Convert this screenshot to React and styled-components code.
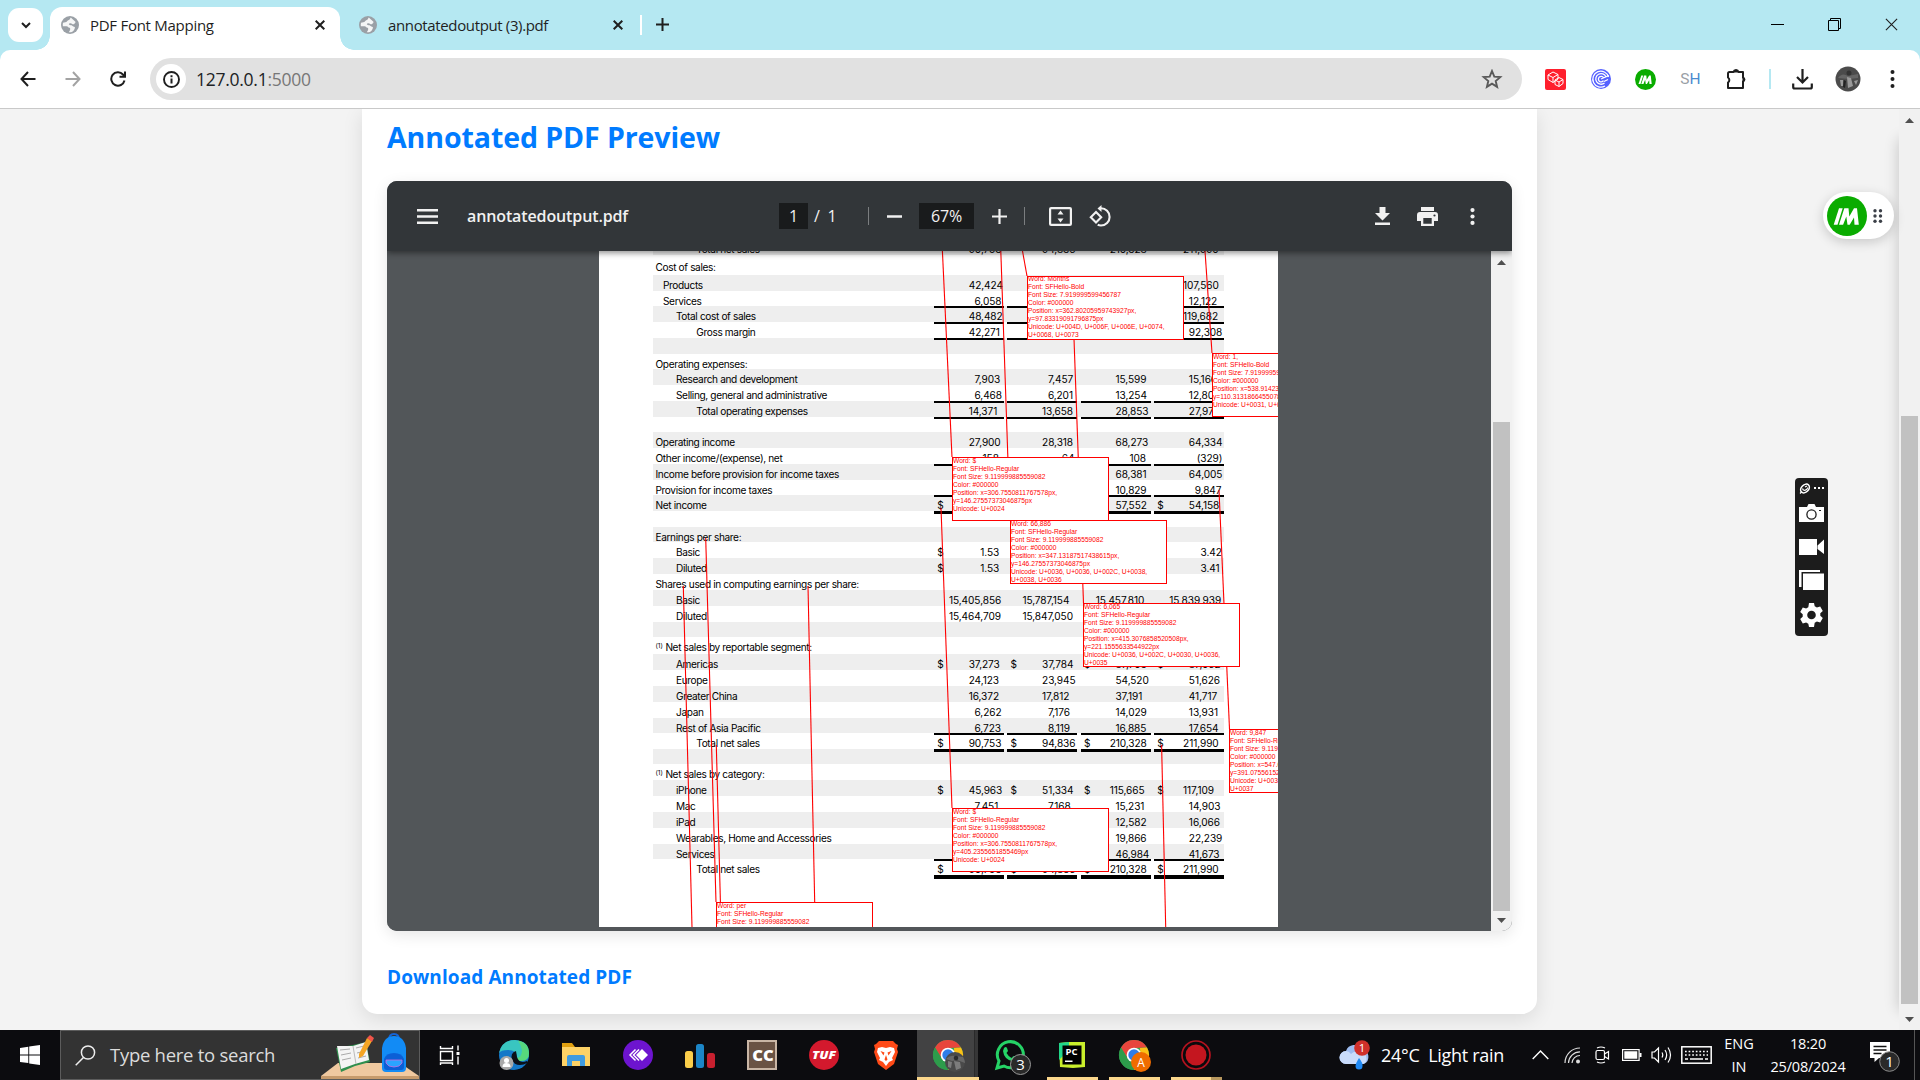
import React from 'react';
import styled, { createGlobalStyle } from 'styled-components';

const Global = createGlobalStyle`
  * { box-sizing: border-box; }
  body { margin: 0; overflow: hidden; background: #f3f3f3; }
  svg { display: block; flex: none; }
`;

const ui = `'Open Sans', 'Noto Sans', sans-serif`;

const Screen = styled.div`
  width: 1920px;
  height: 1080px;
  display: flex;
  flex-direction: column;
  overflow: hidden;
  font-family: ${ui};
  color: #1f1f1f;
`;

/* ---------- browser chrome ---------- */

const TabStrip = styled.div`
  height: 50px;
  flex: none;
  background: #b5e8f2;
  display: flex;
  padding-left: 8px;
`;

const TabSearch = styled.div`
  width: 35px;
  height: 34px;
  margin-top: 8px;
  border-radius: 11px;
  background: #fff;
  display: flex;
  align-items: center;
  justify-content: center;
`;

const Tab = styled.div`
  position: relative;
  width: ${(p) => p.$w}px;
  height: 43px;
  margin: 7px 0 0 ${(p) => p.$ml}px;
  padding: 0 15px 7px 11px;
  display: flex;
  align-items: center;
  gap: 11px;
  border-radius: 12px 12px 0 0;
  background: ${(p) => (p.$active ? '#fff' : 'transparent')};
`;

const TabFlare = styled.i`
  position: absolute;
  bottom: 0;
  ${(p) => p.$side}: -14px;
  width: 14px;
  height: 14px;
  background: radial-gradient(circle at ${(p) => (p.$side === 'left' ? '0 0' : '100% 0')}, transparent 13.5px, #fff 14px);
`;

const TabTitle = styled.span`
  flex: 1;
  font-size: 15px;
  letter-spacing: ${(p) => p.$ls}px;
  white-space: pre;
`;

const StripDivider = styled.i`
  width: 2px;
  height: 20px;
  margin: 15px 14px 0 2px;
  background: #fff;
`;

const StripPlus = styled.div`
  padding-top: 18px;
  flex: 1;
`;

const WindowControls = styled.div`
  display: flex;
  align-items: center;
  height: 49px;
  gap: 44px;
  padding-right: 22px;
`;

const ToolbarBack = styled.div`
  background: #b5e8f2;
  flex: none;
`;

const Toolbar = styled.div`
  height: 59px;
  background: #fff;
  border-bottom: 1px solid #c9c9c9;
  border-radius: 10px 10px 0 0;
  display: flex;
  align-items: center;
  padding-left: 5px;
`;

const Slot = styled.div`
  width: ${(p) => p.$w || 45}px;
  display: flex;
  align-items: center;
  justify-content: center;
`;

const Omnibox = styled.div`
  width: 1372px;
  height: 42px;
  margin: 0 11px 0 10px;
  padding: 0 16px 0 6px;
  border-radius: 21px;
  background: #e1e1e1;
  display: flex;
  align-items: center;
  gap: 11px;
`;

const InfoChip = styled.div`
  width: 30px;
  height: 30px;
  border-radius: 50%;
  background: #fff;
  display: flex;
  align-items: center;
  justify-content: center;
`;

const Url = styled.div`
  flex: 1;
  font-size: 17.5px;
  letter-spacing: -0.27px;
  margin-left: -1px;
  color: #202124;
  span { color: #777; }
`;

const ShLabel = styled.span`
  font: 15.5px Roboto, sans-serif;
  color: #9aa0a6;
  b { font-weight: 400; color: #4a8bd0; }
`;

const ToolDivider = styled.i`
  width: 2px;
  height: 20px;
  margin: 0 9px 0 9px;
  background: #b5e8f2;
`;

/* ---------- web page ---------- */

const PageArea = styled.div`
  position: relative;
  flex: 1;
  display: flex;
  min-height: 0;
`;

const Main = styled.main`
  position: relative;
  width: 1899px;
  background: #f3f3f3;
  overflow: hidden;
`;

const EdgeShade = styled.div`
  position: absolute;
  left: 100%;
  top: 30px;
  bottom: 20px;
  width: 30px;
  box-shadow: 0 0 15px rgba(0, 0, 0, 0.2);
`;

const Card = styled.section`
  width: 1175px;
  height: 905px;
  margin: 0 auto;
  padding: 0 25px;
  background: #fff;
  border-radius: 0 0 15px 15px;
  box-shadow: 0 5px 20px rgba(0, 0, 0, 0.1);
  display: flex;
  flex-direction: column;
`;

const Heading = styled.h2`
  margin: 8px 0 24px;
  font-size: 28.5px;
  line-height: 40px;
  letter-spacing: -0.08px;
  font-weight: 700;
  color: #007bff;
`;

const DownloadLink = styled.a`
  margin-top: 33px;
  font-size: 19px;
  line-height: 26px;
  letter-spacing: 0.09px;
  font-weight: 700;
  color: #007bff;
`;

const ScrollTrack = styled.div`
  width: 21px;
  background: #f1f1f1;
  display: flex;
  flex-direction: column;
  align-items: center;
  justify-content: space-between;
  padding: ${(p) => p.$pad};
`;

const ScrollThumb = styled.div`
  width: 17px;
  height: ${(p) => p.$h}px;
  margin-top: ${(p) => p.$mt}px;
  background: #c1c1c1;
`;

const ScrollGroup = styled.div`
  flex: 1;
`;

/* ---------- pdf viewer ---------- */

const Viewer = styled.div`
  height: 750px;
  flex: none;
  border-radius: 10px;
  overflow: hidden;
  background: #525659;
  display: flex;
  flex-direction: column;
`;

const ViewerShadow = styled.div`
  border-radius: 10px;
  box-shadow: 0 4px 15px rgba(0, 0, 0, 0.1);
`;

const PdfBar = styled.div`
  position: relative;
  z-index: 2;
  height: 70px;
  flex: none;
  background: #323639;
  box-shadow: 0 2px 6px rgba(0, 0, 0, 0.45);
  display: flex;
  align-items: center;
  padding: 0 30px;
  color: #f1f1f1;
`;

const PdfTitle = styled.div`
  width: 312px;
  margin-left: 29px;
  font-size: 16px;
  font-weight: 600;
  letter-spacing: -0.12px;
`;

const PdfField = styled.div`
  width: ${(p) => p.$w}px;
  height: 26px;
  background: #191b1c;
  display: flex;
  align-items: center;
  justify-content: center;
  font-size: 16px;
  letter-spacing: -0.2px;
`;

const PdfTotal = styled.div`
  width: 60px;
  padding-left: 6px;
  font-size: 16px;
  word-spacing: 3.5px;
`;

const PdfSep = styled.i`
  width: 1px;
  height: 18px;
  background: #7b7e80;
`;

const PdfTool = styled.div`
  width: ${(p) => p.$w}px;
  margin-left: ${(p) => p.$ml || 0}px;
  display: flex;
  justify-content: center;
`;

const Spacer = styled.div`
  flex: 1;
`;

const PdfBody = styled.div`
  flex: 1;
  min-height: 0;
  display: flex;
`;

const PdfCanvas = styled.div`
  flex: 1;
  padding: 0 213px 4px 212px;
  background: #525659;
`;

const Sheet = styled.div`
  position: relative;
  width: 679px;
  height: 676px;
  padding: 0 54px;
  background: #fff;
  overflow: hidden;
`;

const Statement = styled.div`
  margin-top: -12px;
  font-family: Inter, sans-serif;
  font-size: 10.1px;
  color: #000;
`;

const Line = styled.div`
  height: ${(p) => p.$h}px;
  margin-top: ${(p) => p.$mt || 0}px;
  display: grid;
  grid-template-columns: 277.6px repeat(4, 70px);
  column-gap: 3.4px;
  background: ${(p) => (p.$shade ? '#eee' : 'transparent')};
`;

const Label = styled.div`
  padding: 0 0 0 ${(p) => p.$pad}px;
  line-height: 20.4px;
  height: 100%;
  white-space: nowrap;
  letter-spacing: -0.36px;
  sup { font-size: 6.5px; line-height: 0; vertical-align: 3px; letter-spacing: 0; }
`;

const Cell = styled.div`
  height: 100%;
  border-top: ${(p) => p.$rule || 0}px solid #000;
  padding: 0 4px 0 3.2px;
  display: flex;
  justify-content: space-between;
  line-height: 20.4px;
  white-space: nowrap;
  letter-spacing: -0.08px;
  > * { margin-top: ${(p) => 0 - (p.$rule || 0)}px; }
`;

const Figure = styled.span`
  width: ${(p) => p.$w}px;
  margin-left: auto;
`;

const Wires = styled.svg`
  position: absolute;
  left: 0;
  top: 0;
`;

const Note = styled.div`
  position: absolute;
  left: ${(p) => p.$x}px;
  top: ${(p) => p.$y}px;
  width: 157px;
  height: 64px;
  border: 1px solid #f00;
  background: #fff;
  color: #f00;
  font: 6.67px/8px 'Liberation Sans', Arial, sans-serif;
  white-space: pre;
  div { margin-top: ${(p) => (p.$raise ? -2.5 : -1.5)}px; }
`;

/* ---------- floating tools ---------- */

const FloatPill = styled.div`
  position: absolute;
  left: 1823px;
  top: 83px;
  width: 71px;
  height: 47px;
  border-radius: 24px;
  background: #fff;
  box-shadow: 0 3px 12px rgba(0, 0, 0, 0.18);
  display: flex;
  align-items: center;
  gap: 6px;
  padding-left: 4px;
`;

const Recorder = styled.div`
  position: absolute;
  left: 1795px;
  top: 369px;
  width: 33px;
  height: 158px;
  border-radius: 4px;
  background: #1c1c1c;
`;

/* ---------- taskbar ---------- */

const Taskbar = styled.div`
  height: 50px;
  flex: none;
  background: #0c0c0f;
  display: flex;
  color: #fff;
`;

const StartButton = styled.div`
  width: 60px;
  display: flex;
  align-items: center;
  justify-content: center;
`;

const SearchBox = styled.div`
  width: 360px;
  margin-right: 1px;
  background: #333;
  border: 1px solid #5c5c5c;
  display: flex;
  align-items: center;
  padding-left: 14px;
`;

const SearchText = styled.span`
  margin-left: 14px;
  margin-top: -2px;
  width: 212px;
  font-size: 18.5px;
  letter-spacing: -0.27px;
  color: #dcdcdc;
`;

const TaskButton = styled.div`
  width: 62px;
  display: flex;
  flex-direction: column;
  align-items: center;
  padding-top: 10px;
  background: ${(p) => (p.$on ? 'linear-gradient(90deg, #424243 57px, #1c1c1d 57px, #363637 58px, #363637 61px, transparent 61px)' : 'none')};
  border-bottom: 3px solid ${(p) => (p.$on ? '#fbd78c' : 'transparent')};
`;

const RunMark = styled.i`
  width: ${(p) => p.$w}px;
  height: 3px;
  margin-top: auto;
  margin-bottom: -3px;
  flex: none;
  background: ${(p) => (p.$stack ? 'linear-gradient(90deg, #fbd78c 40px, #b8985f 40px)' : '#fbd78c')};
`;

const Weather = styled.div`
  width: 184px;
  display: flex;
  align-items: center;
  gap: 11px;
  font-size: 18px;
  white-space: pre;
  letter-spacing: -0.3px;
`;

const TrayIcon = styled.div`
  width: ${(p) => p.$w}px;
  display: flex;
  align-items: center;
  justify-content: center;
`;

const TrayText = styled.div`
  width: ${(p) => p.$w}px;
  padding-top: 2px;
  text-align: center;
  font-size: 14.5px;
  line-height: 23px;
  letter-spacing: ${(p) => p.$ls || 0}px;
`;

const ShowDesktop = styled.i`
  width: 6px;
  border-left: 1px solid #555;
`;

/* ---------- icons ---------- */

const Globe = () => (
  <svg width="18" height="18" viewBox="0 0 18 18">
    <circle cx="9" cy="9" r="9" fill="#9aa0a6" />
    <path d="M9.8 1.6c-1 1-.5 2-2 2.4-1.700.3-1.500 1.600-2.500 2L2 6.800a7.300 7.300 0 0 0-.1 3.400h3.600c1.800 0 1.300 1.500 3 1.600.9.100.7 1.300.6 2.100l-1.300 2.300c4 .5 5.300-2 6.200-4.500-.2-1.200-1.500-.7-2.400-1.700-1.200-1.200-2.800-.4-3.600-1.400-.5-.9.600-1.500 1.500-1.400 1.400.2 1.700 1.300 3.200 1 1.200-.2.800-1.800 2.200-2z" fill="#fff" opacity=".9" />
  </svg>
);

const Cross = ({ s = 10, w = 2 }) => (
  <svg width={s} height={s} viewBox="0 0 10 10" stroke="#1f1f1f" strokeWidth={w}>
    <path d="M.7.7l8.600 8.600M9.300.7L.7 9.300" />
  </svg>
);

const ImMark = ({ size }) => (
  <svg width={size} height={size} viewBox="0 0 40 40">
    <circle cx="20" cy="20" r="20" fill="#0aac00" />
    <path d="M12 12.200h3.700l-5.200 16.500H6.700z" fill="#fff" />
    <path d="M17.300 12.200h4.200l.8 8.300 4.700-8.300h3L31.800 28.700h-4.300l-.5-7.200-4.300 7.200h-2.200l-1.200-8.200-3.200 8.200H12z" fill="#fff" />
  </svg>
);

const Dots = ({ color = '#1f1f1f', r = 2, h = 18 }) => (
  <svg width="5" height={h} viewBox={`0 0 5 ${h}`} fill={color}>
    <circle cx="2.500" cy={r} r={r} />
    <circle cx="2.500" cy={h / 2} r={r} />
    <circle cx="2.500" cy={h - r} r={r} />
  </svg>
);

const UpTri = () => (
  <svg width="9" height="5" viewBox="0 0 9 5"><path d="M0 5l4.500-5L9 5z" fill="#505050" /></svg>
);
const DownTri = () => (
  <svg width="9" height="5" viewBox="0 0 9 5"><path d="M0 0l4.500 5L9 0z" fill="#505050" /></svg>
);

const ChromeIcon = ({ badge, letter }) => (
  <svg width="38" height="34" viewBox="-4 0 38 34">
    <circle cx="15" cy="15" r="15" fill="#34a853" />
    <path d="M2 7.500A15 15 0 0 1 28 7.500L15 8 9 19z" fill="#e8453c" />
    <path d="M28 7.500A15 15 0 0 1 15 30l6.500-11L21 8z" fill="#fbc116" />
    <path d="M2 7.500L9 19l8 3-2 8A15 15 0 0 1 2 7.500z" fill="#2d9c4b" />
    <circle cx="15" cy="15" r="7.300" fill="#fff" />
    <circle cx="15" cy="15" r="5.700" fill="#2f7de9" />
    <circle cx="22" cy="22" r="10" fill={badge} />
    {letter ? (
      <text x="22" y="26.500" textAnchor="middle" fontSize="12" fill="#fff" fontFamily="Open Sans">A</text>
    ) : (
      <g fill="#8d8d8d">
        <path d="M13 19q4-4 9-3l8 1q2 3 2 6l-8-3-5 1z" opacity=".45" />
        <circle cx="23" cy="18" r="2.300" fill="#2c2c2c" />
        <path d="M15 21l4 1-1 6-3-1zM21 21l6 1 1 6-5 2z" opacity=".75" />
      </g>
    )}
  </svg>
);

/* ---------- statement data ---------- */

const rows = [
  { h: 16, t: 'Total net sales', i: 3, v: ['90,753', '94,836', '210,328', '211,990'] },
  { h: 18, mt: 2, t: 'Cost of sales:', i: 0 },
  { h: 16, t: 'Products', i: 1, v: ['42,424', '', '', '107,560'] },
  { h: 15, t: 'Services', i: 1, v: ['6,058', '', '', '12,122'] },
  { h: 16, t: 'Total cost of sales', i: 2, rule: 2, v: ['48,482', '', '', '119,682'] },
  { h: 16, t: 'Gross margin', i: 3, rule: 2, v: ['42,271', '', '', '92,308'] },
  { h: 16, rule: 2 },
  { h: 15, t: 'Operating expenses:', i: 0 },
  { h: 16, t: 'Research and development', i: 2, v: ['7,903', '7,457', '15,599', '15,166'] },
  { h: 16, t: 'Selling, general and administrative', i: 2, v: ['6,468', '6,201', '13,254', '12,808'] },
  { h: 16, t: 'Total operating expenses', i: 3, rule: 2, v: ['14,371', '13,658', '28,853', '27,974'] },
  { h: 15, rule: 2 },
  { h: 16, t: 'Operating income', i: 0, v: ['27,900', '28,318', '68,273', '64,334'] },
  { h: 16, t: 'Other income/(expense), net', i: 0, v: ['158', '64', '108', '(329)'] },
  { h: 16, t: 'Income before provision for income taxes', i: 0, rule: 2, v: ['', '', '68,381', '64,005'] },
  { h: 15, t: 'Provision for income taxes', i: 0, v: ['', '', '10,829', '9,847'] },
  { h: 16, t: 'Net income', i: 0, rule: 2, d: [1, 0, 0, 1], v: ['', '', '57,552', '54,158'] },
  { h: 16, rule: 3 },
  { h: 15, t: 'Earnings per share:', i: 0 },
  { h: 16, t: 'Basic', i: 2, d: [1], v: ['1.53', '', '', '3.42'] },
  { h: 16, t: 'Diluted', i: 2, d: [1], v: ['1.53', '', '', '3.41'] },
  { h: 16, t: 'Shares used in computing earnings per share:', i: 0 },
  { h: 16, t: 'Basic', i: 2, v: ['15,405,856', '15,787,154', '15,457,810', '15,839,939'] },
  { h: 16, t: 'Diluted', i: 2, v: ['15,464,709', '15,847,050', '', ''] },
  { h: 15 },
  { h: 17, t: 'Net sales by reportable segment:', i: 0, sup: 1 },
  { h: 16, t: 'Americas', i: 2, d: [1, 1, 1, 1], v: ['37,273', '37,784', '87,703', '87,062'] },
  { h: 16, t: 'Europe', i: 2, v: ['24,123', '23,945', '54,520', '51,626'] },
  { h: 16, t: 'Greater China', i: 2, v: ['16,372', '17,812', '37,191', '41,717'] },
  { h: 16, t: 'Japan', i: 2, v: ['6,262', '7,176', '14,029', '13,931'] },
  { h: 15, t: 'Rest of Asia Pacific', i: 2, v: ['6,723', '8,119', '16,885', '17,654'] },
  { h: 16, t: 'Total net sales', i: 3, rule: 2, d: [1, 1, 1, 1], v: ['90,753', '94,836', '210,328', '211,990'] },
  { h: 15, rule: 3 },
  { h: 16, t: 'Net sales by category:', i: 0, sup: 1 },
  { h: 16, t: 'iPhone', i: 2, d: [1, 1, 1, 1], v: ['45,963', '51,334', '115,665', '117,109'] },
  { h: 16, t: 'Mac', i: 2, v: ['7,451', '7,168', '15,231', '14,903'] },
  { h: 16, t: 'iPad', i: 2, v: ['', '', '12,582', '16,066'] },
  { h: 16, t: 'Wearables, Home and Accessories', i: 2, v: ['', '', '19,866', '22,239'] },
  { h: 15, t: 'Services', i: 2, v: ['', '', '46,984', '41,673'] },
  { h: 16, t: 'Total net sales', i: 3, rule: 2, d: [1, 1, 1, 1], v: ['90,753', '94,836', '210,328', '211,990'] },
  { h: 16, rule: 4, plain: true },
];

const indents = [2.5, 10, 23, 43.3];
const figureWidth = (s) => {
  const digits = s.replace(/[^0-9]/g, '').length;
  return digits * 5.8 + (s.length - digits) * (s[0] === '(' ? 3 : 2.3);
};

const wires = [
  [343.4, 0, 353, 206],
  [342, 257, 353, 557],
  [401.8, 0, 411, 269],
  [423.5, 0, 428, 25],
  [474, 60, 484.5, 352],
  [606, 0, 613, 102],
  [620, 239, 630.5, 478],
  [106.7, 287, 117, 651],
  [84.3, 335, 93, 676],
  [209, 335, 215.7, 651],
  [117.3, 494, 121.4, 651],
  [562.6, 494, 566.7, 676],
];

const notes = [
  [428, 25, 'Word: Months\nFont: SFHello-Bold\nFont Size: 7.919999599456787\nColor: #000000\nPosition: x=362.80205959743927px,\ny=97.83319091796875px\nUnicode: U+004D, U+006F, U+006E, U+0074,\nU+0068, U+0073', true],
  [613, 102, 'Word: 1,\nFont: SFHello-Bold\nFont Size: 7.919999599456787\nColor: #000000\nPosition: x=538.9142303466797px,\ny=110.31318664550781px\nUnicode: U+0031, U+002C'],
  [411, 269, 'Word: 66,886\nFont: SFHello-Regular\nFont Size: 9.119999885559082\nColor: #000000\nPosition: x=347.13187517438615px,\ny=146.27557373046875px\nUnicode: U+0036, U+0036, U+002C, U+0038,\nU+0038, U+0036'],
  [353, 206, 'Word: $\nFont: SFHello-Regular\nFont Size: 9.119999885559082\nColor: #000000\nPosition: x=306.7550811767578px,\ny=146.27557373046875px\nUnicode: U+0024'],
  [484, 352, 'Word: 6,065\nFont: SFHello-Regular\nFont Size: 9.119999885559082\nColor: #000000\nPosition: x=415.3076858520508px,\ny=221.1555633544922px\nUnicode: U+0036, U+002C, U+0030, U+0036,\nU+0035'],
  [630, 478, 'Word: 9,847\nFont: SFHello-Regular\nFont Size: 9.119999885559082\nColor: #000000\nPosition: x=547.0\ny=391.0755615234375px\nUnicode: U+0039, U+002C\nU+0037'],
  [353, 557, 'Word: $\nFont: SFHello-Regular\nFont Size: 9.119999885559082\nColor: #000000\nPosition: x=306.7550811767578px,\ny=405.2355651855469px\nUnicode: U+0024'],
  [117, 651, 'Word: per\nFont: SFHello-Regular\nFont Size: 9.119999885559082'],
];

function Browser() {
  return (
    <>
      <TabStrip>
        <TabSearch>
          <svg width="10" height="7" viewBox="0 0 10 7" fill="none" stroke="#1f1f1f" strokeWidth="2"><path d="M1 1l4 4 4-4" /></svg>
        </TabSearch>
        <Tab $active $w={290} $ml={7}>
          <TabFlare $side="left" />
          <Globe />
          <TabTitle $ls={-0.27}>PDF Font Mapping</TabTitle>
          <Cross />
          <TabFlare $side="right" />
        </Tab>
        <Tab $w={290} $ml={8}>
          <Globe />
          <TabTitle $ls={-0.36}>annotatedoutput (3).pdf</TabTitle>
          <Cross />
        </Tab>
        <StripDivider />
        <StripPlus>
          <svg width="13" height="13" viewBox="0 0 13 13" stroke="#1f1f1f" strokeWidth="2"><path d="M6.500 0v13M0 6.500h13" /></svg>
        </StripPlus>
        <WindowControls>
          <svg width="13" height="13" viewBox="0 0 13 13"><path d="M0 6h13v1H0z" fill="#000" /></svg>
          <svg width="13" height="13" viewBox="0 0 13 13" fill="none" stroke="#000"><path d="M.5 2.500h10v10H.5zM2.500 2.500v-2h10v10h-2" /></svg>
          <Cross s={13} w={0.85} />
        </WindowControls>
      </TabStrip>
      <ToolbarBack>
        <Toolbar>
          <Slot>
            <svg width="16" height="16" viewBox="0 0 16 16" fill="none" stroke="#1f1f1f" strokeWidth="2"><path d="M15.500 8H1.500M8 1L1.500 8 8 15" /></svg>
          </Slot>
          <Slot>
            <svg width="16" height="16" viewBox="0 0 16 16" fill="none" stroke="#a3a3a3" strokeWidth="2"><path d="M.5 8h14M8 1l6.500 7L8 15" /></svg>
          </Slot>
          <Slot>
            <svg width="16" height="16" viewBox="0 0 16 16" fill="none" stroke="#1f1f1f" strokeWidth="2"><path d="M14.500 9.500A6.700 6.700 0 1 1 13 3.500L15 5.500M15 .5v5.300H9.500" /></svg>
          </Slot>
          <Omnibox>
            <InfoChip>
              <svg width="17" height="17" viewBox="0 0 17 17"><circle cx="8.500" cy="8.500" r="7.500" fill="none" stroke="#1f1f1f" strokeWidth="1.900" /><path d="M7.500 7.500h2v5h-2zM7.500 4.300h2v2h-2z" fill="#1f1f1f" /></svg>
            </InfoChip>
            <Url>127.0.0.1<span>:5000</span></Url>
            <svg width="28" height="20" viewBox="-4 0 28 20" fill="none" stroke="#5a5a5a" strokeWidth="1.900"><path d="M10 2l2.300 5.600 6 .5-4.600 3.900 1.400 5.900L10 14.700l-5.100 3.200 1.400-5.900L1.700 8.100l6-.5z" /></svg>
          </Omnibox>
          <Slot>
            <svg width="21" height="21" viewBox="0 0 21 21"><rect width="21" height="21" rx="2" fill="#ff1f2d" /><g fill="none" stroke="#fff" strokeWidth="1"><path d="M3 6l5-3 5 2.500v4.500l-5 3.500-5-3zM3 6l5 2.500 5-3M8 8.500v5M10 11l4-2.500 4 2v4L14 17.500l-4-2zM10 11l4 2 4-2.500M14 13v4.500" /></g></svg>
          </Slot>
          <Slot>
            <svg width="20" height="20" viewBox="0 0 20 20"><circle cx="10" cy="10" r="10" fill="#5561ff" /><g fill="none" stroke="#fff" strokeWidth="1.300"><path d="M17.500 8A8 8 0 1 0 14 17M15 8a5.300 5.300 0 1 0-1.500 6M12.500 8.500a2.800 2.800 0 1 0 0 3.200M10 10l8-3.500M13 12.500l4-2" /></g></svg>
          </Slot>
          <Slot><ImMark size={21} /></Slot>
          <Slot><ShLabel>S<b>H</b></ShLabel></Slot>
          <Slot $w={47}>
            <svg width="22" height="22" viewBox="0 0 22 22"><path d="M3.500 4h4a2.600 2.600 0 0 1 5 0h4.500v5.500a2.400 2.400 0 0 1 0 4V20H2v-5.500a3 3 0 0 0 0-5V5.500A1.500 1.500 0 0 1 3.500 4z" fill="none" stroke="#1f1f1f" strokeWidth="2" strokeLinejoin="round" /><path d="M7.800 4a2.300 2.300 0 0 1 4.500 0zM17 9a2.600 2.600 0 0 1 0 5z" fill="#1f1f1f" stroke="#1f1f1f" /></svg>
          </Slot>
          <ToolDivider />
          <Slot>
            <svg width="21" height="21" viewBox="0 0 21 21" fill="none" stroke="#1f1f1f" strokeWidth="2.200"><path d="M10.500 0v13M5 8l5.500 5.500L16 8M1.200 14.500V18q0 1.500 1.500 1.500h15.600q1.500 0 1.500-1.500v-3.500" /></svg>
          </Slot>
          <Slot>
            <svg width="26" height="26" viewBox="0 0 26 26"><circle cx="13" cy="13" r="12.500" fill="#4b4b4b" /><path d="M3 12q4-6 10-2l10-2v4l-9 1z" fill="#777" opacity=".6" /><circle cx="14" cy="7" r="2.500" fill="#333" /><path d="M5 14h3v6H6zM12 11l4 1 2 8-5 2zM19 15l4-1-2 5z" fill="#9a9a9a" /><path d="M9 14l2 1-1 7-2-1z" fill="#222" /></svg>
          </Slot>
          <Slot><Dots /></Slot>
        </Toolbar>
      </ToolbarBack>
    </>
  );
}

function PdfPage() {
  return (
    <Sheet>
      <Statement>
        {rows.map((r, i) => (
          <Line key={i} $h={r.h} $mt={r.mt} $shade={i % 2 === 0 && !r.plain}>
            <Label $pad={indents[r.i || 0]}>{r.sup && <><sup>(1)</sup> </>}{r.t}</Label>
            {[0, 1, 2, 3].map((c) => (
              <Cell key={c} $rule={r.rule}>
                {r.d && r.d[c] ? <span>$</span> : null}
                {r.v && r.v[c] ? <Figure $w={figureWidth(r.v[c])}>{r.v[c]}</Figure> : null}
              </Cell>
            ))}
          </Line>
        ))}
      </Statement>
      <Wires width="679" height="676" stroke="#f00" strokeWidth="1.100">
        {wires.map(([a, b, c, d], i) => <line key={i} x1={a} y1={b} x2={c} y2={d} />)}
      </Wires>
      {notes.map(([x, y, t, raise], i) => (
        <Note key={i} $x={x} $y={y} $raise={raise}><div>{t}</div></Note>
      ))}
    </Sheet>
  );
}

function PdfViewer() {
  return (
    <ViewerShadow>
      <Viewer>
        <PdfBar>
          <svg width="21" height="15" viewBox="0 0 21 15" fill="#f1f1f1"><path d="M0 0h21v2.500H0zM0 6.200h21v2.500H0zM0 12.500h21V15H0z" /></svg>
          <PdfTitle>annotatedoutput.pdf</PdfTitle>
          <PdfField $w={29}>1</PdfField>
          <PdfTotal>/ 1</PdfTotal>
          <PdfSep />
          <PdfTool $w={50}><svg width="15" height="3" viewBox="0 0 15 3"><path d="M0 .3h15v2.400H0z" fill="#f1f1f1" /></svg></PdfTool>
          <PdfField $w={55}>67%</PdfField>
          <PdfTool $w={50}><svg width="15" height="15" viewBox="0 0 15 15" stroke="#f1f1f1" strokeWidth="2.200"><path d="M7.500 0v15M0 7.500h15" /></svg></PdfTool>
          <PdfSep />
          <PdfTool $w={23} $ml={24}>
            <svg width="23" height="19" viewBox="0 0 23 19"><rect x="1.100" y="1.100" width="20.800" height="16.800" rx="1" fill="none" stroke="#f1f1f1" strokeWidth="2.200" /><path d="M11.500 3.500l3 4h-6zM11.500 15.500l3-4h-6z" fill="#f1f1f1" /></svg>
          </PdfTool>
          <PdfTool $w={23} $ml={17}>
            <svg width="23" height="22" viewBox="0 0 23 22" fill="none" stroke="#f1f1f1" strokeWidth="2.100"><path d="M1.800 12.200L7 7l5.200 5.200L7 17.400z" /><path d="M12 3.300a8.600 8.600 0 0 1 0 17.200q-1.800 0-3.300-.7" /><path d="M12.500 0v7L8.500 3.500z" fill="#f1f1f1" stroke="none" /></svg>
          </PdfTool>
          <Spacer />
          <PdfTool $w={15}><svg width="15" height="18" viewBox="0 0 15 18" fill="#f1f1f1"><path d="M4.500 0h6v6H15l-7.500 7.500L0 6h4.500zM0 15.500h15V18H0z" /></svg></PdfTool>
          <PdfTool $w={21} $ml={27}><svg width="21" height="19" viewBox="0 0 21 19"><path d="M4 0h13v4H4zM3 5h15q3 0 3 3v6h-4v5H4v-5H0V8q0-3 3-3z" fill="#f1f1f1" /><path d="M6.300 11h8.400v5.700H6.300z" fill="#323639" /><circle cx="17.500" cy="8.500" r="1.100" fill="#323639" /></svg></PdfTool>
          <PdfTool $w={5} $ml={32}><Dots color="#f1f1f1" r={2.1} h={17} /></PdfTool>
          <PdfTool $w={7.500} />
        </PdfBar>
        <PdfBody>
          <PdfCanvas><PdfPage /></PdfCanvas>
          <ScrollTrack $pad="9px 0 8px">
            <UpTri />
            <ScrollGroup><ScrollThumb $h={489} $mt={157} /></ScrollGroup>
            <DownTri />
          </ScrollTrack>
        </PdfBody>
      </Viewer>
    </ViewerShadow>
  );
}

function Tray() {
  return (
    <>
      <Weather>
        <svg width="31" height="31" viewBox="0 0 31 31"><path d="M7 24a6.500 6.500 0 0 1 0-13 9 9 0 0 1 16-2 8 8 0 0 1 2 15z" fill="#9dbcf0" /><path d="M7 24a6.500 6.500 0 0 1 0-13q3 0 5 3 4-4 8-1 5-1 7 3 2 6-3 8z" fill="#c9dcfb" /><path d="M20 18q4 5 3.500 8a3.500 3.500 0 0 1-7 0q.3-3 3.500-8z" fill="#1f8af5" /><circle cx="23" cy="8" r="7.800" fill="#d0302a" /><text x="23" y="12.300" fontSize="11.500" textAnchor="middle" fill="#fff" fontFamily="Open Sans">1</text></svg>
        24°C  Light rain
      </Weather>
      <TrayIcon $w={34}><svg width="17" height="10" viewBox="0 0 17 10" fill="none" stroke="#fff" strokeWidth="1.400"><path d="M.7 9l7.800-8 7.800 8" /></svg></TrayIcon>
      <TrayIcon $w={30}><svg width="17" height="17" viewBox="0 0 17 17" fill="none" stroke="#ddd" strokeWidth="1.200"><path d="M1 16A15 15 0 0 1 16 1M4.500 16A11.500 11.500 0 0 1 16 4.800M8 16a8 8 0 0 1 8-7.500" /><circle cx="14" cy="14.500" r="2" fill="#ddd" stroke="none" /></svg></TrayIcon>
      <TrayIcon $w={30}><svg width="15" height="18" viewBox="0 0 15 18" fill="none" stroke="#fff" strokeWidth="1.200"><rect x="1" y="4.500" width="8.500" height="9" rx="1.500" /><path d="M9.500 8l4-2.500v7.500l-4-2.500M2 2Q6 0 10 2M2 16q4 2 8 0" /></svg></TrayIcon>
      <TrayIcon $w={30}><svg width="20" height="12" viewBox="0 0 20 12"><rect x=".6" y=".6" width="16.500" height="10.800" fill="none" stroke="#fff" strokeWidth="1.200" /><path d="M2.300 2.300h13v7.400h-13zM17.500 4H19.500v4h-2z" fill="#fff" /></svg></TrayIcon>
      <TrayIcon $w={29}><svg width="22" height="18" viewBox="0 0 22 18" fill="none" stroke="#fff" strokeWidth="1.200"><path d="M1 6h2.500l4-4v14l-4-4H1zM11 6.500q1.500 2.500 0 5M14 4q3.300 5 0 10M17 1.500q5 7.500 0 15" /></svg></TrayIcon>
      <TrayIcon $w={41}><svg width="31" height="18" viewBox="0 0 31 18"><rect x=".8" y=".8" width="29.400" height="16.400" fill="none" stroke="#fff" strokeWidth="1.500" /><path d="M4 5.500h23M4 9h23" stroke="#fff" strokeWidth="1.500" strokeDasharray="1.700 1.900" /><path d="M4 13h3M9 13h13M24 13h3" stroke="#fff" strokeWidth="1.500" /></svg></TrayIcon>
      <TrayText $w={44}>ENG<br />IN</TrayText>
      <TrayText $w={94} $ls={-0.2}>18:20<br />25/08/2024</TrayText>
      <TrayIcon $w={59}><svg width="32" height="34" viewBox="0 0 32 34"><path d="M1 4h20v16H10l-4.500 4v-4H1z" fill="#fff" /><path d="M4.500 8.500h13M4.500 12h13M4.500 15.500h8" stroke="#111" strokeWidth="1.400" /><circle cx="20.500" cy="23.500" r="9.800" fill="#2a2a2a" stroke="#8b8b8b" /><text x="20.500" y="29" fontSize="15" textAnchor="middle" fill="#fff" fontFamily="Open Sans">1</text></svg></TrayIcon>
      <ShowDesktop />
    </>
  );
}

function Bar() {
  return (
    <Taskbar>
      <StartButton>
        <svg width="20" height="20" viewBox="0 0 20 20" fill="#fff"><path d="M0 3l8.300-1.200v7.700H0zM9.200 1.600L20 0v9.500H9.200zM0 10.400h8.300v7.700L0 17zM9.200 10.400H20V20L9.200 18.400z" /></svg>
      </StartButton>
      <SearchBox>
        <svg width="21" height="21" viewBox="0 0 21 21" fill="none" stroke="#eee" strokeWidth="1.500"><circle cx="13" cy="7.500" r="6.600" /><path d="M8.500 12.500L.7 20.300" /></svg>
        <SearchText>Type here to search</SearchText>
        <svg width="98" height="48" viewBox="0 0 98 48">
          <path d="M0 45l17-13h62l19 13v3H0z" fill="#f0c9a0" /><path d="M0 45h98v3H0z" fill="#c79b6c" />
          <path d="M15 17l17-3 13-3 4 20-15 4-14 6z" fill="#2f8f4e" /><path d="M16 15l16 0 13-4 3 18-14 4-14 5z" fill="#f4f4f4" /><path d="M32 15l3 18" stroke="#bbb" /><path d="M19 19l10-1M20 24l10-2M21 29l9-2M35 17l8-2M36 22l8-2M37 27l8-2" stroke="#aaa" />
          <path d="M38 23l8-16 5 3-9 15-4 2z" fill="#f5a623" /><path d="M46 7l3-3 4 3-2 4z" fill="#f0554a" />
          <path d="M68 9q0-6 5-6t5 6" fill="none" stroke="#1565d8" strokeWidth="2" /><path d="M61 17q2-12 12-12t12 12v20q0 4-4 4H65q-4 0-4-4z" fill="#128bf5" /><path d="M63 28q2-6 10-6t10 6v8q0 3-3 3H66q-3 0-3-3z" fill="#0b5fd6" /><path d="M65 29h16v3q-2 4-8 4t-8-4z" fill="#2aa4ff" stroke="#c86ae0" strokeWidth=".8" />
        </svg>
      </SearchBox>
      <TaskButton><svg width="26" height="30" viewBox="0 0 26 30" fill="none" stroke="#fff" strokeWidth="1.400"><path d="M1.500 11.500h12v9h-12zM1.500 6v2.500h12V6M1.500 25v-2h12v2M19 5.500v5M19 16.500v8" /><path d="M17.500 12h3v3h-3z" fill="#fff" stroke="none" /></svg></TaskButton>
      <TaskButton><svg width="30" height="30" viewBox="0 0 30 30"><circle cx="15" cy="15" r="15" fill="#1478c8" /><path d="M0 13Q3 0 16 0q14 1 14 13 0 8-8 8-5 0-4-4 0-7-9-7-7 0-9 3z" fill="#39c6c0" /><path d="M19 .5Q30 3 30 13q0 8-8 8-4 0-4-3 5-1 5-8-1-5-4-9.500z" fill="#5fdc6a" opacity=".8" /><path d="M17 11q-6 2-4 9 2 5 8 5 4 0 7-2 1-1 0-2-8 3-10-4z" fill="#0c1018" /><circle cx="7.500" cy="23" r="7" fill="#a9a9a9" /><circle cx="7.500" cy="20.500" r="2.500" fill="#fff" /><path d="M3.500 27q0-4 4-4t4 4z" fill="#fff" /></svg></TaskButton>
      <TaskButton><svg width="28" height="30" viewBox="0 0 28 30"><path d="M0 3h10l3 4h14v4H0z" fill="#e0a010" /><path d="M0 7h28v19H0z" fill="#fdd266" /><path d="M5 26V17q0-2 2-2h14q2 0 2 2v9h-5v-5h-8v5z" fill="#3f9be0" /></svg></TaskButton>
      <TaskButton><svg width="30" height="30" viewBox="0 0 30 30"><circle cx="15" cy="15" r="15" fill="#6d14cf" /><path d="M19 9l6 6-6 6-6-6z" fill="#fff" /><path d="M12.500 9.500L7 15l5.500 5.500M16 9.500L10.500 15l5.500 5.500" fill="none" stroke="#fff" strokeWidth="1.500" /></svg></TaskButton>
      <TaskButton><svg width="30" height="30" viewBox="0 0 30 30"><rect y="11" width="8" height="17" rx="2.500" fill="#fbce4a" /><rect x="11" y="4" width="8" height="24" rx="2.500" fill="#1c86c7" /><rect x="22" y="13" width="8" height="15" rx="2.500" fill="#c8202f" /></svg></TaskButton>
      <TaskButton><svg width="30" height="30" viewBox="0 0 30 30"><rect width="30" height="30" fill="#c9b6a5" /><rect x="2" y="2" width="26" height="26" fill="#6a5344" /><text x="16" y="21" fontSize="16.500" fontWeight="800" textAnchor="middle" fill="#fff" fontFamily="Open Sans">CC</text></svg></TaskButton>
      <TaskButton><svg width="30" height="30" viewBox="0 0 30 30"><circle cx="15" cy="15" r="15" fill="#d3192d" /><text x="15" y="18.800" fontSize="10.500" fontWeight="800" fontStyle="italic" textAnchor="middle" textLength="24" lengthAdjust="spacingAndGlyphs" fill="#fff" fontFamily="Open Sans">TUF</text></svg></TaskButton>
      <TaskButton><svg width="26" height="30" viewBox="0 0 26 30"><path d="M6 1h14l3 3 2 1-1 4 1 3-4 12-8 6-8-6L1 12l1-3-1-4 2-1z" fill="#ff4a17" /><path d="M5 8l4-1 4 1 4-1 4 1 1 4-3 6 1 2-4 2-3 4-3-4-4-2 1-2-3-6z" fill="#fff" /><path d="M7.500 11l4 1.500-1 3zM18.500 11l-4 1.500 1 3zM13 15l1.500 4.500L13 21l-1.500-1.500z" fill="#ff4a17" /></svg></TaskButton>
      <TaskButton $on><ChromeIcon badge="#4a4a4a" /></TaskButton>
      <TaskButton><svg width="42" height="36" viewBox="-6 0 42 36"><path d="M2 28l2-7A13 13 0 1 1 9 26z" fill="none" stroke="#25d366" strokeWidth="3" /><path d="M9 8q2-2 3 0l1 3-1.500 2q2 3.500 5 5l2-2 3.500 2q0 3-3.500 3.500Q9 20 8 11z" fill="#25d366" /><circle cx="25.500" cy="24.500" r="10" fill="#2a2a2a" stroke="#999" /><text x="25.500" y="30" fontSize="15" textAnchor="middle" fill="#fff" fontFamily="Open Sans">3</text></svg></TaskButton>
      <TaskButton><svg width="26" height="30" viewBox="0 0 26 30"><path d="M0 3l10-1 16 0v25l-12 1-13-1z" fill="#c9ee2b" /><path d="M0 3l10-1v8L0 20z" fill="#21d789" /><rect x="3.500" y="5.500" width="19" height="19" fill="#000" /><text x="12.500" y="15" fontSize="9.500" fontWeight="700" textAnchor="middle" fill="#fff" fontFamily="Open Sans">PC</text><path d="M6 20.500h7.500v1.500H6z" fill="#fff" /></svg><RunMark $w={51} /></TaskButton>
      <TaskButton><ChromeIcon badge="#ef6c00" letter /><RunMark $w={51} /></TaskButton>
      <TaskButton><svg width="30" height="30" viewBox="0 0 30 30"><circle cx="15" cy="15" r="14" fill="#0a0a0c" stroke="#b3131f" strokeWidth="1.700" /><circle cx="15" cy="15" r="10.500" fill="#c4161f" /></svg><RunMark $w={51} $stack /></TaskButton>
      <Spacer />
      <Tray />
    </Taskbar>
  );
}

export default function App() {
  return (
    <Screen>
      <Global />
      <Browser />
      <PageArea>
        <Main>
          <Card>
            <Heading>Annotated PDF Preview</Heading>
            <PdfViewer />
            <DownloadLink>Download Annotated PDF</DownloadLink>
          </Card>
          <EdgeShade />
        </Main>
        <ScrollTrack $pad="9px 0 8px">
          <UpTri />
          <ScrollGroup><ScrollThumb $h={588} $mt={293} /></ScrollGroup>
          <DownTri />
        </ScrollTrack>
        <FloatPill>
          <ImMark size={40} />
          <svg width="10" height="14" viewBox="0 0 10 14" fill="#3c4048">
            {[1.800, 7, 12.200].map((y) => <React.Fragment key={y}><circle cx="2" cy={y} r="1.700" /><circle cx="7.500" cy={y} r="1.700" /></React.Fragment>)}
          </svg>
        </FloatPill>
        <Recorder>
          <svg width="33" height="158" viewBox="0 0 33 158" fill="#fff">
            <ellipse cx="10" cy="10.500" rx="5" ry="3.600" transform="rotate(-45 10 10.500)" fill="none" stroke="#fff" strokeWidth="1.600" /><path d="M7.500 10.500q1 3 4 1l1.500-2M10 9l2-1M5 15.500l2-2" fill="none" stroke="#fff" strokeWidth="1.200" />
            <path d="M19 9h2v2h-2zM23 9h2v2h-2zM27 9h2v2h-2z" />
            <path d="M4 29h8l1.500-3h6l1.500 3h8v15H4z" /><circle cx="16.500" cy="36.500" r="4.600" fill="#fff" stroke="#1c1c1c" strokeWidth="1.300" /><path d="M24 32h2v1h-2z" fill="#1c1c1c" />
            <path d="M4 61h18v16H4zM22.500 67.500l6.500-6v14.500l-6.500-5z" />
            <path d="M4 92h21v2H6.500v15H4z" /><path d="M8 95.500h21V112H8z" />
            <path d="M14 125h5l.7 3.300 2.200 1.300 3.300-1.100 2.600 4.400-2.500 2.300v2.600l2.500 2.300-2.600 4.400-3.300-1.100-2.200 1.300L19 149h-5l-.7-3.300-2.200-1.300-3.300 1.100-2.600-4.400 2.500-2.300v-2.600l-2.500-2.300 2.600-4.400 3.300 1.100 2.200-1.300z" /><circle cx="16.500" cy="137" r="4.300" fill="#1c1c1c" />
          </svg>
        </Recorder>
      </PageArea>
      <Bar />
    </Screen>
  );
}
